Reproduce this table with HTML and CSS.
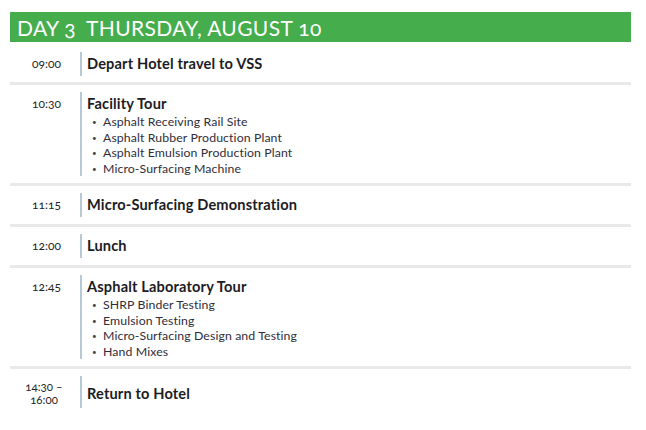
FILE: index.html
```html
<!DOCTYPE html>
<html>
<head>
<meta charset="utf-8">
<link rel="stylesheet" href="styles.css">
</head>
<body>
<div class="schedule">
  <div class="day-header"><span class="day">DAY 3</span><span class="date">THURSDAY, AUGUST 10</span></div>

  <div class="row row-first">
    <div class="time">09:00</div>
    <div class="content"><div class="title">Depart Hotel travel to VSS</div></div>
  </div>

  <div class="row">
    <div class="time">10:30</div>
    <div class="content">
      <div class="title">Facility Tour</div>
      <ul class="items">
        <li>Asphalt Receiving Rail Site</li>
        <li>Asphalt Rubber Production Plant</li>
        <li>Asphalt Emulsion Production Plant</li>
        <li>Micro-Surfacing Machine</li>
      </ul>
    </div>
  </div>

  <div class="row">
    <div class="time">11:15</div>
    <div class="content"><div class="title">Micro-Surfacing Demonstration</div></div>
  </div>

  <div class="row">
    <div class="time">12:00</div>
    <div class="content"><div class="title">Lunch</div></div>
  </div>

  <div class="row">
    <div class="time">12:45</div>
    <div class="content">
      <div class="title">Asphalt Laboratory Tour</div>
      <ul class="items">
        <li>SHRP Binder Testing</li>
        <li>Emulsion Testing</li>
        <li>Micro-Surfacing Design and Testing</li>
        <li>Hand Mixes</li>
      </ul>
    </div>
  </div>

  <div class="row row-last">
    <div class="time time-range"><div>14:30 –</div><div>16:00</div></div>
    <div class="content content-tall"><div class="title">Return to Hotel</div></div>
  </div>
</div>
</body>
</html>
```

FILE: styles.css
```css
* { box-sizing: border-box; }

body {
  margin: 0;
  background: #ffffff;
  font-family: "Lato", "Open Sans", sans-serif;
  font-variant-numeric: oldstyle-nums;
}

.schedule {
  margin: 12px 0 0 10px;
  width: 621px;
}

.day-header {
  background: #45ad4b;
  color: #ffffff;
  height: 30px;
  padding: 3px 0 0 7px;
  font-size: 21px;
  font-weight: 400;
  line-height: 26px;
  letter-spacing: 0.35px;
  white-space: nowrap;
}

.day { margin-right: 10px; }

.row {
  display: flex;
  align-items: flex-start;
  padding: 7px 0 7px;
  border-bottom: 3px solid #e8e9ea;
}

.row-first { padding-top: 10px; padding-bottom: 6px; }
.row-last { border-bottom: none; padding-top: 7px; }

.time {
  width: 70px;
  flex: none;
  padding-right: 19px;
  text-align: right;
  font-size: 12px;
  line-height: 24px;
  color: #222;
}

.time-range {
  font-size: 11.5px;
  line-height: 13px;
  padding-top: 4px;
  padding-right: 14px;
  text-align: center;
  padding-left: 12px;
}

.content {
  border-left: 2px solid #b7c8d6;
  padding-left: 5px;
  min-height: 24px;
}

.content-tall { min-height: 32px; padding-top: 6px; }

.title {
  font-size: 14.6px;
  font-weight: 700;
  color: #1c1c24;
  line-height: 23px;
  letter-spacing: 0.15px;
}

.items {
  list-style: none;
  margin: -1px 0 0;
  padding: 0 0 0 5px;
}

.items li {
  font-size: 12.3px;
  line-height: 15.5px;
  height: 15.5px;
  color: #2f2d3a;
  letter-spacing: 0.1px;
}

.items li::before {
  content: "•";
  display: inline-block;
  width: 11px;
  font-size: 8px;
  line-height: 0;
  vertical-align: 1px;
  color: #444;
}
```
